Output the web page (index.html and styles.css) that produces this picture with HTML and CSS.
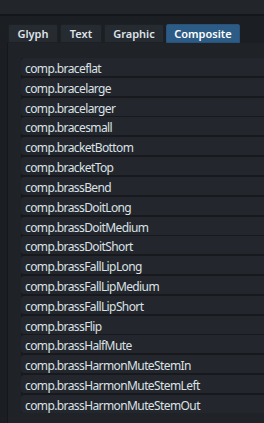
FILE: index.html
```html
<!DOCTYPE html>
<html lang="en">
<head>
    <meta charset="UTF-8">
    <meta name="viewport" content="width=device-width, initial-scale=1.0">
    <title>Composite</title>
    <link rel="stylesheet" href="styles.css">
</head>
<body>
<div class="topbar"></div>

<div class="tabs">
    <div class="tab tab-glyph">Glyph</div>
    <div class="tab tab-text">Text</div>
    <div class="tab tab-graphic">Graphic</div>
    <div class="tab tab-composite active">Composite</div>
</div>

<div class="panel">
    <ul class="list">
        <li>comp.braceflat</li>
        <li>comp.bracelarge</li>
        <li>comp.bracelarger</li>
        <li>comp.bracesmall</li>
        <li>comp.bracketBottom</li>
        <li>comp.bracketTop</li>
        <li>comp.brassBend</li>
        <li>comp.brassDoitLong</li>
        <li>comp.brassDoitMedium</li>
        <li>comp.brassDoitShort</li>
        <li>comp.brassFallLipLong</li>
        <li>comp.brassFallLipMedium</li>
        <li>comp.brassFallLipShort</li>
        <li>comp.brassFlip</li>
        <li>comp.brassHalfMute</li>
        <li>comp.brassHarmonMuteStemIn</li>
        <li>comp.brassHarmonMuteStemLeft</li>
        <li>comp.brassHarmonMuteStemOut</li>
    </ul>
</div>
</body>
</html>
```

FILE: styles.css
```css
html, body {
    margin: 0;
    height: 100%;
    overflow: hidden;
}
body {
    background-color: #1b1e22;
    font-family: "Noto Sans", "Open Sans", sans-serif;
    color: #dce1e6;
}

.topbar {
    height: 14px;
    background-color: #22262b;
    border-bottom: 2px solid #141619;
}

/* Onglets */
.tabs {
    display: flex;
    gap: 2px;
    margin-top: 8px;
    padding-left: 8px;
}
.tab {
    height: 19px;
    line-height: 18px;
    box-sizing: border-box;
    text-align: center;
    font-size: 11px;
    font-weight: 600;
    color: #dfe3e8;
    background-color: #262b32;
    border: 1px solid #1d2025;
    border-radius: 2px 2px 0 0;
}
.tab-glyph { width: 50px; }
.tab-text { width: 42px; }
.tab-graphic { width: 60px; }
.tab-composite { width: 74px; }
.tab.active {
    background-color: #2c5c86;
    border-color: #2a5278;
    color: #ffffff;
}

/* Panneau */
.panel {
    box-sizing: border-box;
    margin-left: 7px;
    height: calc(100% - 43px);
    overflow: hidden;
    border-left: 1px solid #15171a;
    background-color: #1f2227;
    padding: 15px 0 0 13px;
}

.list {
    list-style: none;
    margin: 0;
    padding: 0;
    background-color: #17191c;
}
.list li {
    box-sizing: border-box;
    height: 18px;
    line-height: 16px;
    padding-top: 3px;
    margin-bottom: 1.82px;
    padding-left: 4px;
    font-size: 12px;
    letter-spacing: -0.6px;
    background-color: #23272d;
    border-radius: 3px 0 0 3px;
    white-space: nowrap;
}
```
